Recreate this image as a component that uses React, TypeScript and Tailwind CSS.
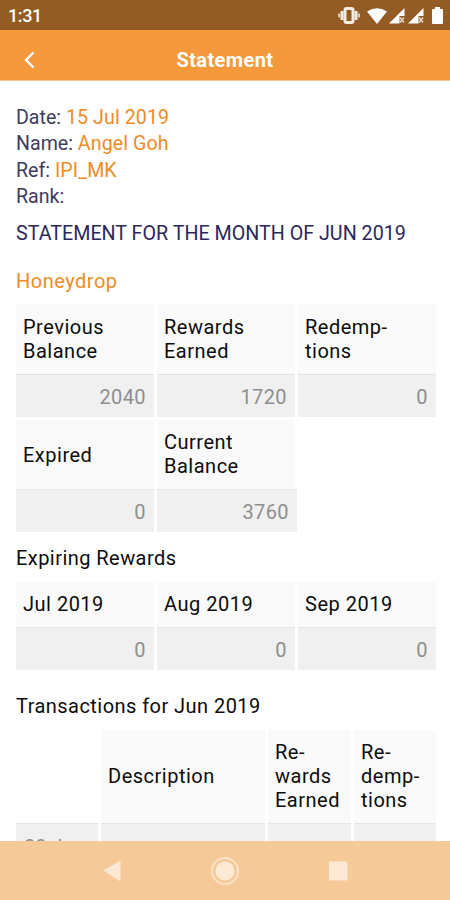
const details = [
  { label: 'Date', value: '15 Jul 2019' },
  { label: 'Name', value: 'Angel Goh' },
  { label: 'Ref', value: 'IPI_MK' },
  { label: 'Rank', value: '' },
];

const expiring = [
  { month: 'Jul 2019', amount: 0 },
  { month: 'Aug 2019', amount: 0 },
  { month: 'Sep 2019', amount: 0 },
];

const HeadCell = ({ children, className = '' }: any) => (
  <div
    className={`flex items-center bg-[#fafafa] pl-[7px] leading-6 tracking-[0.5px] whitespace-pre-line text-[#0c0c0c] ${className}`}
  >
    {children}
  </div>
);

const ValueCell = ({ children, className = '' }: any) => (
  <div
    className={`flex items-center justify-end border-t border-[#e4e4e4] bg-[#f0f0f0] pt-[2px] pr-2 text-[#8e8e8e] ${className}`}
  >
    {children}
  </div>
);

const Signal = () => (
  <svg width="16" height="16" viewBox="0 0 16 16" className="ml-[6px]">
    <path d="M15.5 0v8h-5v7.5H0z" fill="#fff" />
    <path d="M11 9.5l4 5M15 9.5l-4 5" stroke="#e4d3c1" strokeWidth="1.6" />
  </svg>
);

const StatusBar = () => (
  <div className="flex h-[30px] shrink-0 items-center bg-[#925c24] pl-2 pr-[7px] text-white">
    <span className="mt-[2px] text-[18px] font-medium leading-none tracking-[-0.4px]">1:31</span>
    <div className="ml-auto flex items-center pt-px">
      <svg width="22" height="17" viewBox="0 0 22 17">
        <rect x="7" y="1.5" width="8" height="14" rx="1.5" fill="none" stroke="#f5eadf" strokeWidth="3" />
        <path d="M4 4v9M18 4v9" stroke="#f5eadf" strokeWidth="3" />
        <path d="M1 6.5v4M21 6.5v4" stroke="#f5eadf" strokeWidth="1.5" />
      </svg>
      <svg width="20" height="16" viewBox="0 0 20 16" className="ml-[7px]">
        <path d="M0 3.5Q10-3 20 3.5L10 16z" fill="#fff" />
      </svg>
      <span className="-ml-1 flex">
        <Signal />
      </span>
      <span className="-ml-[3px] flex">
        <Signal />
      </span>
      <svg width="11" height="18" viewBox="0 0 11 18" className="ml-2">
        <path d="M3 0h5v2h2q1 0 1 1v13q0 1-1 1H1q-1 0-1-1V3q0-1 1-1h2z" fill="#fff" />
      </svg>
    </div>
  </div>
);

const NavBar = () => (
  <div className="flex h-[59px] shrink-0 items-center justify-center bg-[#f6c999]">
    <svg width="250" height="30" viewBox="0 0 250 30" fill="#fce9d3">
      <path d="M3.5 14.5L20.5 4.5v21z" />
      <circle cx="125" cy="15" r="9.5" />
      <circle cx="125" cy="15" r="13" fill="none" stroke="#fce9d3" strokeWidth="1.5" />
      <rect x="229" y="5.5" width="18.5" height="19" rx="1" />
    </svg>
  </div>
);

const App = () => {
  return (
    <div className="flex h-[900px] w-[450px] flex-col overflow-hidden bg-white font-['Roboto',sans-serif] text-[20px] tracking-[0.4px]">
      <StatusBar />
      <header className="grid h-[51px] shrink-0 grid-cols-[80px_1fr_80px] items-center border-b border-[#f9c696] bg-[#f4993c] text-white">
        <svg width="12" height="18" viewBox="0 0 12 18" className="ml-6 mt-[9px]">
          <path d="M9.5 1.5L2 9l7.5 7.5" fill="none" stroke="#fff" strokeWidth="2.4" />
        </svg>
        <h1 className="mt-[9px] text-center font-bold">Statement</h1>
      </header>

      <main className="min-h-0 flex-1 overflow-hidden px-4 pt-6">
        {details.map((item) => (
          <p
            key={item.label}
            className="h-[26.3px] text-[19.6px] leading-[26.4px] tracking-normal text-[#3f3b5c]"
          >
            {item.label}: <span className="tracking-[0.1px] text-[#ee8c26]">{item.value}</span>
          </p>
        ))}
        <p className="mt-3 text-[19.7px] leading-6 tracking-normal whitespace-nowrap text-[#2c2859]">
          STATEMENT FOR THE MONTH OF JUN 2019
        </p>
        <h2 className="mt-[23px] leading-6 tracking-[0.5px] text-[#ee8c26]">Honeydrop</h2>

        {/* Balances */}
        <div className="mt-[11px] grid w-[420px] grid-cols-3 gap-x-[3px]">
          <HeadCell className="h-[70px]">{'Previous\nBalance'}</HeadCell>
          <HeadCell>{'Rewards\nEarned'}</HeadCell>
          <HeadCell>{'Redemp-\ntions'}</HeadCell>
          <ValueCell className="h-[43px]">2040</ValueCell>
          <ValueCell>1720</ValueCell>
          <ValueCell>0</ValueCell>
          <HeadCell className="mt-[3px] h-[69px]">Expired</HeadCell>
          <HeadCell className="mt-[3px] pb-px">{'Current\nBalance'}</HeadCell>
          <span />
          <ValueCell className="h-[43px]">0</ValueCell>
          <ValueCell className="-mr-[2px]">3760</ValueCell>
        </div>

        <h3 className="mt-[14px] leading-6 tracking-[0.45px] text-[#0c0c0c]">Expiring Rewards</h3>
        <div className="mt-3 grid w-[420px] grid-cols-3 gap-x-[3px]">
          {expiring.map((item) => (
            <div key={item.month}>
              <HeadCell className="h-[45px] pb-px">{item.month}</HeadCell>
              <ValueCell className="h-[43px]">{item.amount}</ValueCell>
            </div>
          ))}
        </div>

        <h3 className="mt-6 leading-6 tracking-[0.45px] text-[#0c0c0c]">
          Transactions for Jun 2019
        </h3>
        <div className="mt-3 grid w-[420px] grid-cols-[82px_164px_83px_82px] gap-x-[3px]">
          <span />
          <HeadCell className="h-[93px] pb-px">Description</HeadCell>
          <HeadCell className="pb-px">{'Re-\nwards\nEarned'}</HeadCell>
          <HeadCell className="pb-px">{'Re-\ndemp-\ntions'}</HeadCell>
          <ValueCell className="h-[67px] items-start! justify-start! pt-[11px]! pl-2 leading-6 tracking-normal">
            28 Jun
          </ValueCell>
          <ValueCell />
          <ValueCell />
          <ValueCell />
        </div>
      </main>
      <NavBar />
    </div>
  );
};

export default App;
